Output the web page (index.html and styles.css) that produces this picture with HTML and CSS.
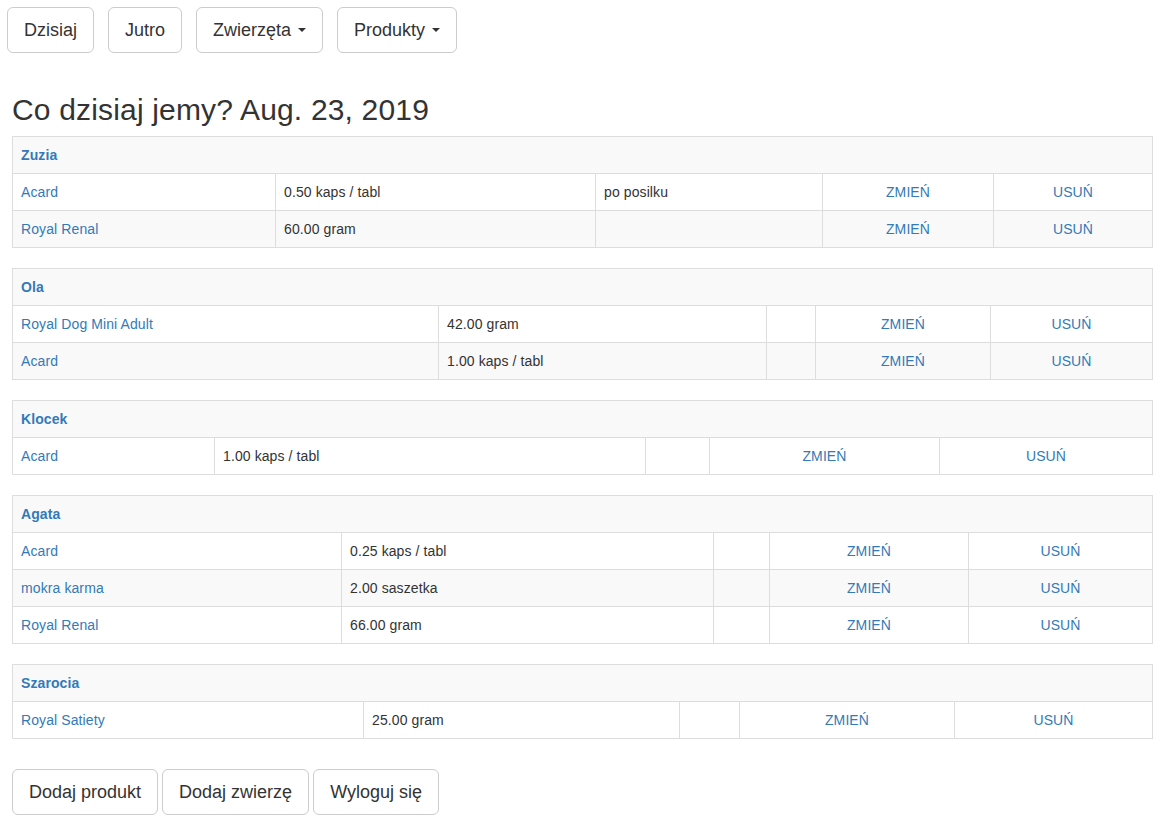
FILE: index.html
```html
<!DOCTYPE html>
<html lang="pl">
<head>
<meta charset="utf-8">
<title>Co dzisiaj jemy?</title>
<link rel="stylesheet" href="styles.css">
</head>
<body>
<nav class="topnav">
  <a class="btn btn-lg" href="#">Dzisiaj</a>
  <a class="btn btn-lg" href="#">Jutro</a>
  <a class="btn btn-lg" href="#">Zwierzęta <span class="caret"></span></a>
  <a class="btn btn-lg" href="#">Produkty <span class="caret"></span></a>
</nav>
<main class="main">
  <h2 class="title">Co dzisiaj jemy? Aug. 23, 2019</h2>

  <table class="tbl t-zuzia">
    <colgroup><col><col><col><col><col></colgroup>
    <tbody>
      <tr><td colspan="5" class="pet"><a href="#">Zuzia</a></td></tr>
      <tr><td><a href="#">Acard</a></td><td>0.50 kaps / tabl</td><td>po posilku</td><td class="c"><a href="#">ZMIEŃ</a></td><td class="c"><a href="#">USUŃ</a></td></tr>
      <tr><td><a href="#">Royal Renal</a></td><td>60.00 gram</td><td></td><td class="c"><a href="#">ZMIEŃ</a></td><td class="c"><a href="#">USUŃ</a></td></tr>
    </tbody>
  </table>

  <table class="tbl t-ola">
    <colgroup><col><col><col><col><col></colgroup>
    <tbody>
      <tr><td colspan="5" class="pet"><a href="#">Ola</a></td></tr>
      <tr><td><a href="#">Royal Dog Mini Adult</a></td><td>42.00 gram</td><td></td><td class="c"><a href="#">ZMIEŃ</a></td><td class="c"><a href="#">USUŃ</a></td></tr>
      <tr><td><a href="#">Acard</a></td><td>1.00 kaps / tabl</td><td></td><td class="c"><a href="#">ZMIEŃ</a></td><td class="c"><a href="#">USUŃ</a></td></tr>
    </tbody>
  </table>

  <table class="tbl t-klocek">
    <colgroup><col><col><col><col><col></colgroup>
    <tbody>
      <tr><td colspan="5" class="pet"><a href="#">Klocek</a></td></tr>
      <tr><td><a href="#">Acard</a></td><td>1.00 kaps / tabl</td><td></td><td class="c"><a href="#">ZMIEŃ</a></td><td class="c"><a href="#">USUŃ</a></td></tr>
    </tbody>
  </table>

  <table class="tbl t-agata">
    <colgroup><col><col><col><col><col></colgroup>
    <tbody>
      <tr><td colspan="5" class="pet"><a href="#">Agata</a></td></tr>
      <tr><td><a href="#">Acard</a></td><td>0.25 kaps / tabl</td><td></td><td class="c"><a href="#">ZMIEŃ</a></td><td class="c"><a href="#">USUŃ</a></td></tr>
      <tr><td><a href="#">mokra karma</a></td><td>2.00 saszetka</td><td></td><td class="c"><a href="#">ZMIEŃ</a></td><td class="c"><a href="#">USUŃ</a></td></tr>
      <tr><td><a href="#">Royal Renal</a></td><td>66.00 gram</td><td></td><td class="c"><a href="#">ZMIEŃ</a></td><td class="c"><a href="#">USUŃ</a></td></tr>
    </tbody>
  </table>

  <table class="tbl t-szarocia">
    <colgroup><col><col><col><col><col></colgroup>
    <tbody>
      <tr><td colspan="5" class="pet"><a href="#">Szarocia</a></td></tr>
      <tr><td><a href="#">Royal Satiety</a></td><td>25.00 gram</td><td></td><td class="c"><a href="#">ZMIEŃ</a></td><td class="c"><a href="#">USUŃ</a></td></tr>
    </tbody>
  </table>

  <div class="actions">
    <a class="btn btn-lg" href="#">Dodaj produkt</a>
    <a class="btn btn-lg" href="#">Dodaj zwierzę</a>
    <a class="btn btn-lg" href="#">Wyloguj się</a>
  </div>
</main>
</body>
</html>
```

FILE: styles.css
```css
* { box-sizing: border-box; }
html, body { margin: 0; padding: 0; }
body {
  font-family: "Liberation Sans", Arial, Helvetica, sans-serif;
  font-size: 14px;
  line-height: 20px;
  color: #333;
  background: #fff;
}
a { color: #337ab7; text-decoration: none; }

.btn {
  display: inline-block;
  border: 1px solid #ccc;
  background: #fff;
  color: #333;
  white-space: nowrap;
}
.btn-lg {
  padding: 10px 16px;
  font-size: 18px;
  line-height: 24px;
  border-radius: 6px;
}
.caret {
  display: inline-block;
  width: 0;
  height: 0;
  margin-left: 2px;
  vertical-align: middle;
  border-top: 4px solid #333;
  border-left: 4px solid transparent;
  border-right: 4px solid transparent;
  position: relative;
  top: -1px;
}

.topnav {
  display: flex;
  gap: 14px;
  padding: 7px 7px 0 7px;
}

.main { padding: 0 13px 0 12px; }

.title {
  font-size: 30px;
  font-weight: 500;
  line-height: 33px;
  letter-spacing: 0.17px;
  margin: 40px 0 10px 0;
}

.tbl {
  width: 100%;
  table-layout: fixed;
  border-collapse: collapse;
  margin-bottom: 20px;
}
.tbl td {
  border: 1px solid #ddd;
  padding: 8px;
  line-height: 20px;
  letter-spacing: 0.1px;
  vertical-align: top;
  white-space: nowrap;
  overflow: hidden;
}
.tbl tr:nth-child(odd) td { background: #f9f9f9; }
.tbl td.c { text-align: center; }
.tbl td.pet a { font-weight: bold; }

.t-zuzia col:nth-child(1) { width: 263px; }
.t-zuzia col:nth-child(2) { width: 320px; }
.t-zuzia col:nth-child(3) { width: 227px; }
.t-zuzia col:nth-child(4) { width: 171px; }
.t-zuzia col:nth-child(5) { width: 159px; }

.t-ola col:nth-child(1) { width: 426px; }
.t-ola col:nth-child(2) { width: 328px; }
.t-ola col:nth-child(3) { width: 49px; }
.t-ola col:nth-child(4) { width: 175px; }
.t-ola col:nth-child(5) { width: 162px; }

.t-klocek col:nth-child(1) { width: 202px; }
.t-klocek col:nth-child(2) { width: 431px; }
.t-klocek col:nth-child(3) { width: 64px; }
.t-klocek col:nth-child(4) { width: 230px; }
.t-klocek col:nth-child(5) { width: 213px; }

.t-agata col:nth-child(1) { width: 329px; }
.t-agata col:nth-child(2) { width: 372px; }
.t-agata col:nth-child(3) { width: 56px; }
.t-agata col:nth-child(4) { width: 199px; }
.t-agata col:nth-child(5) { width: 184px; }

.t-szarocia col:nth-child(1) { width: 351px; }
.t-szarocia col:nth-child(2) { width: 316px; }
.t-szarocia col:nth-child(3) { width: 60px; }
.t-szarocia col:nth-child(4) { width: 215px; }
.t-szarocia col:nth-child(5) { width: 198px; }

.actions {
  display: flex;
  gap: 4px;
  margin-top: 30px;
}
```
